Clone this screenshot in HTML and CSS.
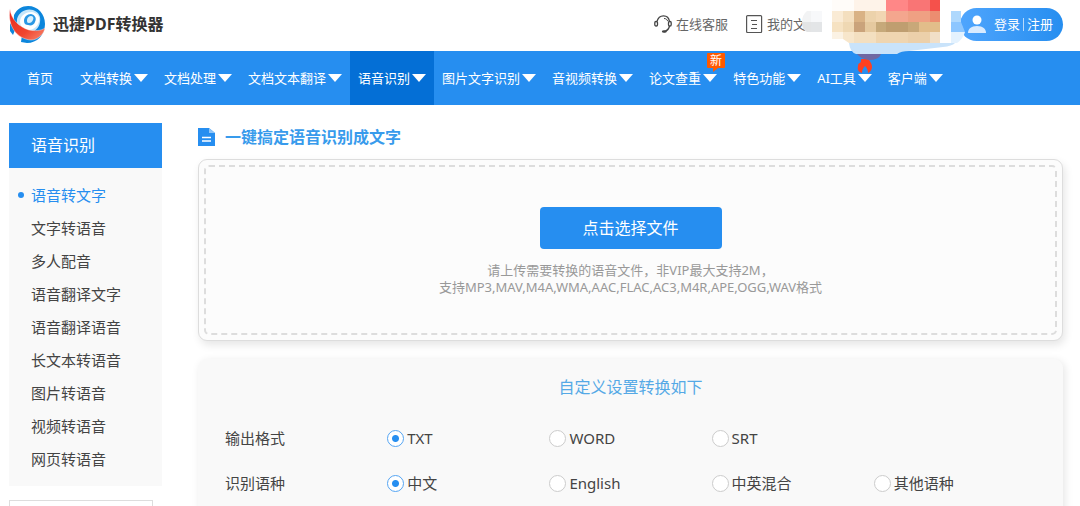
FILE: index.html
```html
<!DOCTYPE html>
<html lang="zh-CN">
<head>
<meta charset="utf-8">
<title>迅捷PDF转换器</title>
<link rel="stylesheet" href="styles.css">
</head>
<body>
<header class="topbar">
  <a class="brand" href="#">
    <svg class="brand-logo" viewBox="0 0 36 37" aria-hidden="true">
      <defs><linearGradient id="swoosh" x1="0" y1="0" x2="1" y2="1"><stop offset="0" stop-color="#e8291f"/><stop offset=".6" stop-color="#f0452f"/><stop offset="1" stop-color="#f88a70"/></linearGradient></defs>
      <path d="M5 9C8 3 13 0 19 0c10 0 17 8 17 18 0 11-8 19-18 19l-6-1 1-7C7 26 4 17 5 9z" fill="#0c86dc"/>
      <path d="M8 13C10 6 17 2 24 4c6 2 8 7 7 12-1 7-6 10-12 11C12 27 7 21 8 13z" fill="#c5e6fa"/>
      <path d="M11 15c1-6 6-9 12-9 5 1 8 4 7 9-1 6-6 9-11 9-5 0-8-4-8-9z" fill="#fff"/>
      <path d="M15 15c0-4 3-7 7-7 4 1 6 4 4 8-1 3-4 4-7 3-2 0-4-1-4-4z" fill="#2a98e4"/>
      <path d="M18 14c0-2 2-4 4-4s3 2 2 4-2 3-4 3-2-1-2-3z" fill="#d9f0fc"/>
      <path d="M1 17l5 7-2 5-3-4z" fill="#0c86dc"/>
      <path d="M1 3c1 10 9 18 19 21 6 1 12 1 16-2-1 6-7 12-14 12C8 33-2 20 1 3z" fill="url(#swoosh)" stroke="#fff" stroke-width=".4"/>
    </svg>
    <span>迅捷PDF转换器</span>
  </a>
  <div class="tools">
    <a class="tool" href="#">
      <svg class="icon" viewBox="0 0 18 18" fill="none" stroke="#444" stroke-width="1.3" aria-hidden="true"><path d="M3 6.500C4 2.500 6.500.8 9.500.8S15 3 15.500 6.500M15.500 11c-.5 2.500-2 4.500-4.500 5.300"/><rect x=".8" y="6.500" width="2.700" height="4.500" rx="1.200"/><rect x="14.500" y="6.500" width="2.700" height="4.500" rx="1.200"/><path d="M10 3.500c2 0 3.200 1 3.700 2.700" stroke-width="1"/><ellipse cx="10.300" cy="16.500" rx="1.800" ry=".7" fill="#333"/></svg>
      <span>在线客服</span>
    </a>
    <a class="tool" href="#">
      <svg class="icon" viewBox="0 0 18 18" fill="none" stroke="#555" stroke-width="1.200" aria-hidden="true"><rect x="1.600" y=".6" width="15" height="17" rx="1"/><path d="M6 5.500h6M7 9.500h5M6 13.500h6" stroke-width="1"/></svg>
      <span>我的文</span>
    </a>
    <a class="login" href="#">
      <svg class="icon" viewBox="0 0 18 18" aria-hidden="true"><circle cx="9" cy="5" r="4.500" fill="#fff"/><path d="M0 18c0-4 3-7 9-7s9 3 9 7z" fill="#d9ebff"/></svg>
      <span>登录</span><i class="bar"></i><span>注册</span>
    </a>
  </div>
  <svg class="mosaic" viewBox="0 0 165 62" aria-hidden="true">
    <path d="M9 11H5Q0 15 0 22h9z" fill="#f2f3f4"/><path d="M0 22h9v10H5Q0 30 0 22z" fill="#e3e4e5"/><path d="M9 11h11v11H9z" fill="#f7f8fa"/><path d="M9 22h11v10H9z" fill="#e3e5e7"/>
    <path d="M55 54h24q-2 6-12 6-8-1-12-6z" fill="#6f68a3"/>
    <path d="M30 0h22v11H30z" fill="#fffcf9"/><path d="M52 0h32v11H52z" fill="#fef3e9"/>
    <path d="M84 0h22v11H84z" fill="#ff8787"/><path d="M106 0h22v11h-22z" fill="#f97575"/><path d="M128 0h10v11h-10z" fill="#f5514b"/>
    <path d="M30 11h11v11H30z" fill="#faebd5"/><path d="M41 11h11v11H41z" fill="#f4dfbf"/><path d="M52 11h11v11H52z" fill="#d9b285"/><path d="M63 11h11v11H63z" fill="#ecd2ab"/><path d="M74 11h10v11H74z" fill="#f1d6b2"/><path d="M84 11h22v11H84z" fill="#f4a68e"/><path d="M106 11h22v11h-22z" fill="#efa083"/><path d="M128 11h10v11h-10z" fill="#ec8d70"/>
    <path d="M30 22h11v10H30z" fill="#f6e2c2"/><path d="M41 22h11v10H41z" fill="#efd8b3"/><path d="M52 22h11v10H52z" fill="#caa37b"/><path d="M63 22h11v10H63z" fill="#e5c99f"/><path d="M74 22h10v10H74z" fill="#c6a97a"/><path d="M84 22h22v10H84z" fill="#bf9e70"/><path d="M106 22h11v10h-11z" fill="#c8a879"/><path d="M117 22h21v10h-21z" fill="#e2bd8a"/>
    <path d="M30 32h11v7H30z" fill="#fbf2e4"/><path d="M41 32h11v11h-5l-6-4z" fill="#f7e6cb"/><path d="M52 32h22v11H52z" fill="#f3dfc0"/><path d="M74 32h32v11H74z" fill="#efd5b0"/><path d="M106 32h22v11h-22z" fill="#ecd0aa"/><path d="M128 32h10v11h-10z" fill="#f1dfc7"/>
    <path d="M47 43h106q-3 3-12 4l-34 4q-8 0-12 3H54q-6-2-7-11z" fill="#c9e3fa"/>
    <path d="M149 11h10v11h-10z" fill="#aed8fd"/><path d="M149 22h10l4 10h-14z" fill="#8cc6ff"/><path d="M149 32h14q-2 7-8 11h-6z" fill="#e4f2fe"/>
  </svg>
</header>

<nav class="nav">
  <a class="nav-item home" href="#">首页</a>
  <a class="nav-item" href="#">文档转换<i class="arrow"></i></a>
  <a class="nav-item" href="#">文档处理<i class="arrow"></i></a>
  <a class="nav-item" href="#">文档文本翻译<i class="arrow"></i></a>
  <a class="nav-item active" href="#">语音识别<i class="arrow"></i></a>
  <a class="nav-item" href="#">图片文字识别<i class="arrow"></i></a>
  <a class="nav-item" href="#">音视频转换<i class="arrow"></i></a>
  <a class="nav-item" href="#">论文查重<i class="arrow"></i><b class="badge">新</b></a>
  <a class="nav-item" href="#">特色功能<i class="arrow"></i></a>
  <a class="nav-item" href="#">AI工具<i class="arrow"></i>
    <svg class="flame" viewBox="0 0 16 14" aria-hidden="true"><path d="M4 0h8c0 2 3 4 3 8 0 3-2 5-4 6 0-3-1-5-3-7-2 2-3 4-3 7-3-1-5-3-4-7 0-2 1-3 2-3 1-1 1-2 1-4z" fill="#ff4020"/></svg></a>
  <a class="nav-item" href="#">客户端<i class="arrow"></i></a>
</nav>

<div class="page">
  <aside class="side">
    <h2 class="side-title">语音识别</h2>
    <ul class="side-list">
      <li><a class="current" href="#">语音转文字</a></li>
      <li><a href="#">文字转语音</a></li>
      <li><a href="#">多人配音</a></li>
      <li><a href="#">语音翻译文字</a></li>
      <li><a href="#">语音翻译语音</a></li>
      <li><a href="#">长文本转语音</a></li>
      <li><a href="#">图片转语音</a></li>
      <li><a href="#">视频转语音</a></li>
      <li><a href="#">网页转语音</a></li>
    </ul>
    <div class="side-card"></div>
  </aside>

  <main class="main">
    <h1 class="title">
      <svg class="title-icon" viewBox="0 0 17 18" aria-hidden="true"><path d="M0 0h11l6 5v13H0z" fill="#268ef0"/><path d="M11 0l6 5h-6z" fill="#8fc5f8"/><path d="M4 9.500h9M4 13h9" stroke="#fff" stroke-width="1.500"/></svg>
      <span>一键搞定语音识别成文字</span>
    </h1>
    <section class="upload">
      <div class="drop">
        <button class="choose" type="button">点击选择文件</button>
        <p class="hint">请上传需要转换的语音文件，非VIP最大支持2M，<br>支持MP3,MAV,M4A,WMA,AAC,FLAC,AC3,M4R,APE,OGG,WAV格式</p>
      </div>
    </section>
    <section class="settings">
      <h2 class="settings-title">自定义设置转换如下</h2>
      <div class="row" role="radiogroup" aria-labelledby="fmt">
        <span id="fmt">输出格式</span>
        <label class="option"><input type="radio" name="format" checked>TXT</label>
        <label class="option"><input type="radio" name="format">WORD</label>
        <label class="option"><input type="radio" name="format">SRT</label>
      </div>
      <div class="row" role="radiogroup" aria-labelledby="lng">
        <span id="lng">识别语种</span>
        <label class="option"><input type="radio" name="lang" checked>中文</label>
        <label class="option"><input type="radio" name="lang">English</label>
        <label class="option"><input type="radio" name="lang">中英混合</label>
        <label class="option"><input type="radio" name="lang">其他语种</label>
      </div>
    </section>
  </main>
</div>
</body>
</html>
```

FILE: styles.css
```css
* { box-sizing: border-box; }
body {
  display: flex;
  flex-direction: column;
  margin: 0;
  height: 100vh;
  overflow: hidden;
  background: #fff;
  color: #444;
  font: 13px/17px "Noto Sans", "Noto Sans CJK SC", sans-serif;
}
a { color: inherit; text-decoration: none; }
h1, h2, p, ul { margin: 0; padding: 0; }
ul { list-style: none; }

.topbar {
  position: relative;
  display: flex;
  flex: none;
  align-items: center;
  justify-content: space-between;
  height: 51px;
  padding: 0 17px 3px 9px;
}
.brand {
  display: flex;
  align-items: center;
  gap: 8px;
  color: #333;
  font-size: 16px;
  font-weight: bold;
}
.brand-logo { width: 36px; height: 37px; }
.tools { display: flex; align-items: center; gap: 17px; }
.tool { display: flex; align-items: center; gap: 4px; color: #666; }
.icon { width: 18px; height: 18px; }
.login {
  display: flex;
  align-items: center;
  justify-content: center;
  gap: 3px;
  height: 33px;
  margin-left: 137px;
  padding: 0 10px 0 8px;
  border-radius: 17px;
  background: linear-gradient(90deg, #4fa5fd, #268ef0);
  color: #fff;
}
.login .icon { margin-right: 5px; }
.bar { width: 1px; height: 13px; background: #b9dafa; }
.mosaic {
  position: absolute;
  z-index: 2;
  top: 0;
  right: 113px;
  width: 165px;
  height: 62px;
}

.nav {
  display: flex;
  flex: none;
  height: 54px;
  padding-left: 9px;
  background: #268ef0;
  color: #fff;
}
.nav-item {
  position: relative;
  display: flex;
  align-items: center;
  gap: 2px;
  padding: 0 8px;
  white-space: nowrap;
}
.home { padding: 0 19px 0 18px; }
.active { background: #046fd6; }
.arrow {
  border: 7px solid transparent;
  border-top: 8px solid #fff;
  border-bottom-width: 0;
}
.badge {
  position: absolute;
  top: 2px;
  right: 0;
  padding: 0 3px;
  border-radius: 1px;
  background: #ff5a00;
  font-size: 12px;
  font-weight: normal;
  line-height: 15px;
}
.badge::after {
  content: "";
  position: absolute;
  left: 6px;
  top: 15px;
  border-top: 4px solid #ff5a00;
  border-right: 5px solid transparent;
}
.flame {
  position: absolute;
  top: 8px;
  right: 7px;
  width: 16px;
  height: 14px;
}

.page {
  display: grid;
  flex: 1;
  min-height: 0;
  overflow: hidden;
  grid-template-columns: 153px 1fr;
  gap: 36px;
  padding: 18px 17px 0 9px;
}
.side-title {
  padding-left: 22px;
  background: #268ef0;
  color: #fff;
  font-size: 16px;
  font-weight: normal;
  line-height: 45px;
}
.side-list { padding: 11px 0 10px; background: #f9f9f9; }
.side-list a {
  display: block;
  position: relative;
  padding-left: 22px;
  font-size: 15px;
  line-height: 33px;
}
.side-list .current { color: #268ef0; }
.current::before {
  content: "";
  position: absolute;
  left: 9px;
  top: 13px;
  width: 6px;
  height: 6px;
  border-radius: 50%;
  background: #268ef0;
}
.side-card {
  height: 60px;
  margin: 14px 9px 0 0;
  border: 1px solid #ddd;
}

.title {
  display: flex;
  align-items: center;
  gap: 10px;
  height: 28px;
  color: #389bec;
  font-size: 16px;
  font-weight: bold;
}
.title-icon { width: 17px; height: 18px; }
.upload {
  margin-top: 8px;
  padding: 5px;
  border: 1px solid #ddd;
  border-radius: 9px;
  background: #fcfcfc;
  box-shadow: 2px 4px 9px rgba(0, 0, 0, .1);
}
.drop {
  display: flex;
  flex-direction: column;
  align-items: center;
  gap: 13px;
  padding: 40px 0 37px;
  border: 2px dashed #ddd;
  border-radius: 5px;
}
.choose {
  width: 182px;
  height: 42px;
  padding: 0;
  border: 0;
  border-radius: 4px;
  background: #268ef0;
  color: #fff;
  font: inherit;
  font-size: 16px;
}
.hint { color: #999; text-align: center; }

.settings {
  margin-top: 18px;
  padding: 17px 27px 30px;
  border-radius: 9px;
  background: #f9f9f9;
  box-shadow: 2px 2px 9px rgba(0, 0, 0, .1);
}
.settings-title {
  margin-bottom: 18px;
  color: #55a9e6;
  font-size: 16px;
  font-weight: normal;
  line-height: 22px;
  text-align: center;
}
.row {
  display: grid;
  grid-template-columns: repeat(5, 1fr);
  align-items: center;
  height: 45px;
  font-size: 15px;
}
.option { display: flex; align-items: center; gap: 3px; }
.option input {
  appearance: none;
  width: 17px;
  height: 17px;
  margin: 0;
  border: 1px solid #ccc;
  border-radius: 50%;
  background: #fff;
}
.option input:checked {
  border-color: #55a5f3;
  background: radial-gradient(circle, #268ef0 3px, #fff 4px);
}
```
